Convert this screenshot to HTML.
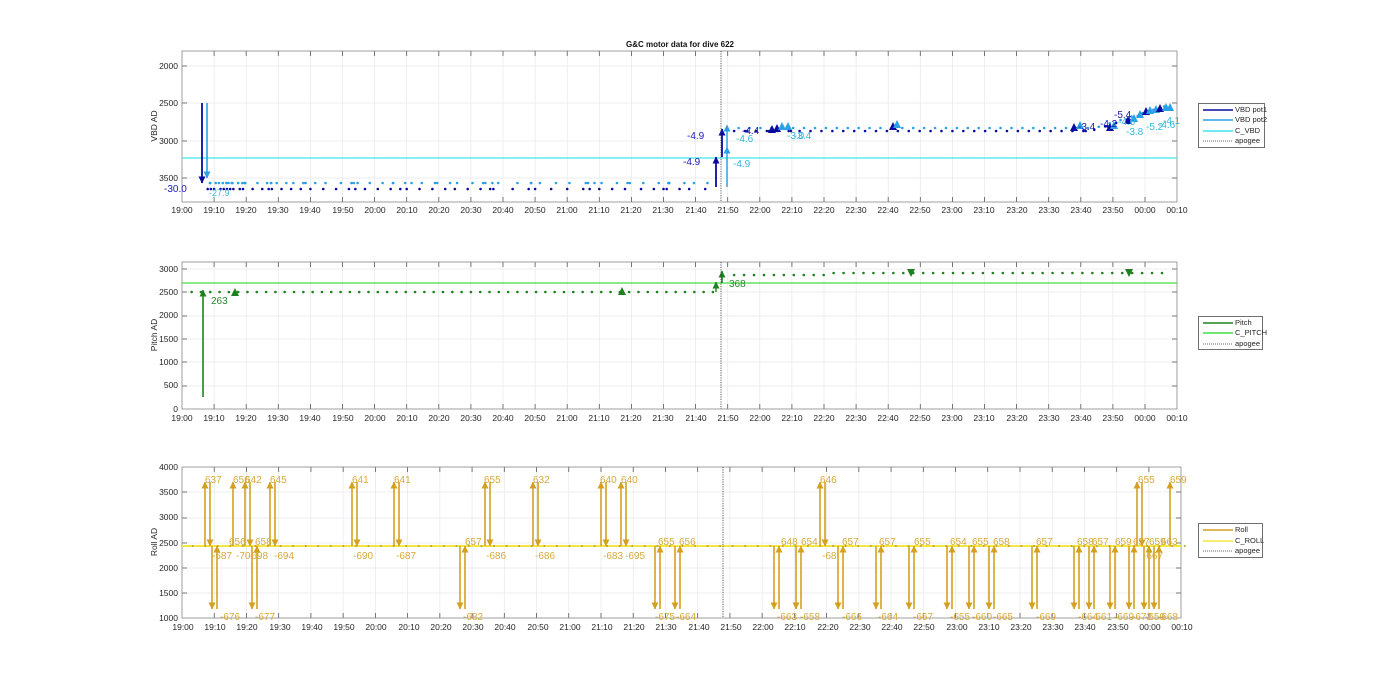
<!DOCTYPE html>
<html><head><meta charset="utf-8"><style>
html,body{margin:0;padding:0;background:#fff;width:1400px;height:693px;overflow:hidden}
svg{display:block;font-family:"Liberation Sans",Arial,sans-serif}
.tk{font-size:8.5px;fill:#262626}
.yl{font-size:8.5px;fill:#262626;text-anchor:end}
.lg{font-size:7.5px;fill:#262626}
</style></head><body>
<svg id="s" width="1400" height="693" viewBox="0 0 1400 693" xmlns="http://www.w3.org/2000/svg">
<rect width="1400" height="693" fill="#fff"/>
<g id="grid"></g>
<g id="data"></g>
<text x="680" y="47" font-size="8px" font-weight="bold" text-anchor="middle" fill="#111">G&amp;C motor data for dive 622</text>
<!-- y labels -->
<text transform="translate(157,126) rotate(-90)" font-size="8.5px" text-anchor="middle" fill="#262626">VBD AD</text>
<text transform="translate(157,335) rotate(-90)" font-size="8.5px" text-anchor="middle" fill="#262626">Pitch AD</text>
<text transform="translate(157,542) rotate(-90)" font-size="8.5px" text-anchor="middle" fill="#262626">Roll AD</text>
<!-- y tick labels -->
<g class="yl"><text x="178" y="69">2000</text><text x="178" y="106">2500</text><text x="178" y="144">3000</text><text x="178" y="181">3500</text></g>
<g class="yl"><text x="178" y="272">3000</text><text x="178" y="295">2500</text><text x="178" y="318">2000</text><text x="178" y="342">1500</text><text x="178" y="365">1000</text><text x="178" y="388">500</text><text x="178" y="412">0</text></g>
<g class="yl"><text x="178" y="470">4000</text><text x="178" y="495">3500</text><text x="178" y="520">3000</text><text x="178" y="546">2500</text><text x="178" y="571">2000</text><text x="178" y="596">1500</text><text x="178" y="621">1000</text></g>
<!-- time labels -->
<g class="tk" text-anchor="middle">
<text y="213"><tspan x="182">19:00</tspan><tspan x="214">19:10</tspan><tspan x="246">19:20</tspan><tspan x="278">19:30</tspan><tspan x="310">19:40</tspan><tspan x="343">19:50</tspan><tspan x="375">20:00</tspan><tspan x="407">20:10</tspan><tspan x="439">20:20</tspan><tspan x="471">20:30</tspan><tspan x="503">20:40</tspan><tspan x="535">20:50</tspan><tspan x="567">21:00</tspan><tspan x="599">21:10</tspan><tspan x="631">21:20</tspan><tspan x="663">21:30</tspan><tspan x="696">21:40</tspan><tspan x="728">21:50</tspan><tspan x="760">22:00</tspan><tspan x="792">22:10</tspan><tspan x="824">22:20</tspan><tspan x="856">22:30</tspan><tspan x="888">22:40</tspan><tspan x="920">22:50</tspan><tspan x="952">23:00</tspan><tspan x="984">23:10</tspan><tspan x="1017">23:20</tspan><tspan x="1049">23:30</tspan><tspan x="1081">23:40</tspan><tspan x="1113">23:50</tspan><tspan x="1145">00:00</tspan><tspan x="1177">00:10</tspan></text>
<text y="421"><tspan x="182">19:00</tspan><tspan x="214">19:10</tspan><tspan x="246">19:20</tspan><tspan x="278">19:30</tspan><tspan x="310">19:40</tspan><tspan x="343">19:50</tspan><tspan x="375">20:00</tspan><tspan x="407">20:10</tspan><tspan x="439">20:20</tspan><tspan x="471">20:30</tspan><tspan x="503">20:40</tspan><tspan x="535">20:50</tspan><tspan x="567">21:00</tspan><tspan x="599">21:10</tspan><tspan x="631">21:20</tspan><tspan x="663">21:30</tspan><tspan x="696">21:40</tspan><tspan x="728">21:50</tspan><tspan x="760">22:00</tspan><tspan x="792">22:10</tspan><tspan x="824">22:20</tspan><tspan x="856">22:30</tspan><tspan x="888">22:40</tspan><tspan x="920">22:50</tspan><tspan x="952">23:00</tspan><tspan x="984">23:10</tspan><tspan x="1017">23:20</tspan><tspan x="1049">23:30</tspan><tspan x="1081">23:40</tspan><tspan x="1113">23:50</tspan><tspan x="1145">00:00</tspan><tspan x="1177">00:10</tspan></text>
<text y="630"><tspan x="183">19:00</tspan><tspan x="215">19:10</tspan><tspan x="247">19:20</tspan><tspan x="280">19:30</tspan><tspan x="312">19:40</tspan><tspan x="344">19:50</tspan><tspan x="376">20:00</tspan><tspan x="409">20:10</tspan><tspan x="441">20:20</tspan><tspan x="473">20:30</tspan><tspan x="505">20:40</tspan><tspan x="538">20:50</tspan><tspan x="570">21:00</tspan><tspan x="602">21:10</tspan><tspan x="634">21:20</tspan><tspan x="666">21:30</tspan><tspan x="699">21:40</tspan><tspan x="731">21:50</tspan><tspan x="763">22:00</tspan><tspan x="795">22:10</tspan><tspan x="828">22:20</tspan><tspan x="860">22:30</tspan><tspan x="892">22:40</tspan><tspan x="924">22:50</tspan><tspan x="957">23:00</tspan><tspan x="989">23:10</tspan><tspan x="1021">23:20</tspan><tspan x="1053">23:30</tspan><tspan x="1085">23:40</tspan><tspan x="1118">23:50</tspan><tspan x="1150">00:00</tspan><tspan x="1182">00:10</tspan></text>
</g>
<!-- panel 1 labels -->
<g font-size="10px">
<text x="164" y="192" fill="#1a1ab0">-30.0</text>
<text x="209" y="196" fill="#40b8e8" font-size="9px">-27.9</text>
<text x="687" y="139" fill="#1a1ab0">-4.9</text>
<text x="683" y="165" fill="#1a1ab0">-4.9</text>
<text x="733" y="167" fill="#30b8e0">-4.9</text>
<text x="736" y="142" fill="#30b8e0">-4.6</text>
<text x="742" y="134" fill="#1a1ab0">-4.4</text>
<text x="787" y="139" fill="#30b8e0">-3.0</text>
<text x="794" y="139" fill="#30b8e0">-3.4</text>
<text x="1078" y="130" fill="#1a1ab0">-3.4</text>
<text x="1114" y="118" fill="#1a1ab0">-5.4</text>
<text x="1100" y="127" fill="#1a1ab0">-4.2</text>
<text x="1118" y="125" fill="#30b8e0">-4.6</text>
<text x="1126" y="135" fill="#30b8e0">-3.8</text>
<text x="1146" y="130" fill="#30b8e0">-5.2</text>
<text x="1163" y="124" fill="#30b8e0">-4.1</text>
<text x="1158" y="128" fill="#30b8e0">-4.6</text>
</g>
<!-- panel 2 labels -->
<g font-size="10px" fill="#2a8a2a"><text x="211" y="304">263</text><text x="729" y="287">368</text></g>
<!-- panel 3 labels -->
<g font-size="10px" fill="#d6aa3a" id="rl">
<text x="205" y="483">637</text><text x="233" y="483">656</text><text x="245" y="483">642</text><text x="270" y="483">645</text>
<text x="352" y="483">641</text><text x="394" y="483">641</text><text x="484" y="483">655</text><text x="533" y="483">632</text>
<text x="600" y="483">640</text><text x="621" y="483">640</text><text x="820" y="483">646</text><text x="1138" y="483">655</text><text x="1170" y="483">659</text>
<text x="212" y="559">-687</text><text x="229" y="545">656</text><text x="236" y="559">-70</text><text x="248" y="559">-698</text><text x="255" y="545">658</text><text x="274" y="559">-694</text>
<text x="353" y="559">-690</text><text x="396" y="559">-687</text><text x="486" y="559">-686</text><text x="535" y="559">-686</text>
<text x="603" y="559">-683</text><text x="625" y="559">-695</text><text x="822" y="559">-68</text><text x="1143" y="559">-667</text>
<text x="220" y="620">-676</text><text x="255" y="620">-677</text><text x="463" y="620">-682</text><text x="655" y="620">-675</text><text x="676" y="620">-664</text>
<text x="465" y="545">657</text><text x="658" y="545">655</text><text x="679" y="545">656</text>
<text x="781" y="545">648</text><text x="801" y="545">654</text><text x="842" y="545">657</text><text x="879" y="545">657</text><text x="914" y="545">655</text><text x="950" y="545">654</text><text x="972" y="545">655</text><text x="993" y="545">658</text><text x="1036" y="545">657</text><text x="1077" y="545">658</text><text x="1092" y="545">657</text><text x="1115" y="545">659</text><text x="1133" y="545">657</text><text x="1149" y="545">659</text><text x="1161" y="545">663</text>
<text x="777" y="620">-663</text><text x="800" y="620">-658</text><text x="842" y="620">-666</text><text x="878" y="620">-664</text><text x="913" y="620">-667</text><text x="950" y="620">-655</text><text x="972" y="620">-660</text><text x="993" y="620">-665</text><text x="1036" y="620">-669</text><text x="1078" y="620">-664</text><text x="1092" y="620">-661</text><text x="1114" y="620">-669</text><text x="1132" y="620">-672</text><text x="1145" y="620">-659</text><text x="1158" y="620">-668</text>
</g>
<!-- legends -->
<g>
<rect x="1198.5" y="103.5" width="66" height="44" fill="#fff" stroke="#333" stroke-width="0.7"/>
<line x1="1203" y1="110" x2="1233" y2="110" stroke="#0a0aa0" stroke-width="1.5"/><text class="lg" x="1235" y="112">VBD pot1</text>
<line x1="1203" y1="120" x2="1233" y2="120" stroke="#2aa0e6" stroke-width="1.5"/><text class="lg" x="1235" y="122">VBD pot2</text>
<line x1="1203" y1="131" x2="1233" y2="131" stroke="#3ee6ee" stroke-width="1.5"/><text class="lg" x="1235" y="133">C_VBD</text>
<line x1="1203" y1="141" x2="1233" y2="141" stroke="#333" stroke-width="0.8" stroke-dasharray="1,1"/><text class="lg" x="1235" y="143">apogee</text>
<rect x="1198.5" y="316.5" width="64" height="33" fill="#fff" stroke="#333" stroke-width="0.7"/>
<line x1="1203" y1="323" x2="1233" y2="323" stroke="#1f801f" stroke-width="1.5"/><text class="lg" x="1235" y="325">Pitch</text>
<line x1="1203" y1="333" x2="1233" y2="333" stroke="#44dd44" stroke-width="1.5"/><text class="lg" x="1235" y="335">C_PITCH</text>
<line x1="1203" y1="344" x2="1233" y2="344" stroke="#333" stroke-width="0.8" stroke-dasharray="1,1"/><text class="lg" x="1235" y="346">apogee</text>
<rect x="1198.5" y="523.5" width="64" height="34" fill="#fff" stroke="#333" stroke-width="0.7"/>
<line x1="1203" y1="530" x2="1233" y2="530" stroke="#d4a020" stroke-width="1.5"/><text class="lg" x="1235" y="532">Roll</text>
<line x1="1203" y1="541" x2="1233" y2="541" stroke="#f2e640" stroke-width="1.5"/><text class="lg" x="1235" y="543">C_ROLL</text>
<line x1="1203" y1="551" x2="1233" y2="551" stroke="#333" stroke-width="0.8" stroke-dasharray="1,1"/><text class="lg" x="1235" y="553">apogee</text>
</g>
</svg>
<script>
(function(){
var NS="http://www.w3.org/2000/svg",G=document.getElementById('grid'),D=document.getElementById('data');
function el(p,tag,a){var e=document.createElementNS(NS,tag);for(var k in a)e.setAttribute(k,a[k]);p.insertBefore(e,p.id=='data'?null:null);p.appendChild(e);return e;}
function ln(p,x1,y1,x2,y2,c,w,da){var a={x1:x1,y1:y1,x2:x2,y2:y2,stroke:c,'stroke-width':w||1};if(da)a['stroke-dasharray']=da;return el(p,'line',a);}
function dot(x,y,c){el(D,'circle',{cx:x,cy:y,r:1.3,fill:c});}
function tri(x,y,c,s,down){s=s||4;var p=down?[x-s,y-s,x+s,y-s,x,y+s]:[x-s,y+s,x+s,y+s,x,y-s];el(D,'polygon',{points:p.join(','),fill:c});}
function arrow(x,y1,y2,c,w){ln(D,x,y1,x,y2,c,w||1.6);tri(x,y2+(y2<y1?3:-3),c,3.5,y2>y1);}
var panels=[{x:182,y:51,w:995,h:151,sp:32.1,yt:[66,103,141,178]},{x:182,y:262,w:995,h:147,sp:32.1,yt:[269,292,316,339,362,386]},{x:182,y:467,w:999,h:151,sp:32.23,yt:[492,518,543,568,593]}];
panels.forEach(function(P){
 for(var i=1;i<31;i++){var x=P.x+P.sp*i;ln(G,x,P.y,x,P.y+P.h,'#e8e8e8',0.7);ln(G,x,P.y,x,P.y+5,'#555',0.8);ln(G,x,P.y+P.h,x,P.y+P.h-5,'#555',0.8);}
 P.yt.forEach(function(y){ln(G,P.x,y,P.x+P.w,y,'#e8e8e8',0.7);ln(G,P.x,y,P.x+5,y,'#555',0.8);ln(G,P.x+P.w,y,P.x+P.w-5,y,'#555',0.8);});
 el(G,'rect',{x:P.x,y:P.y,width:P.w,height:P.h,fill:'none',stroke:'#888','stroke-width':0.8});
});
function X(t){return 182+3.21*t;}
var dk='#0a0aa0',lb='#2aa0e6';
// panel1
ln(D,182,158,1177,158,'#3ee6ee',1.2);
var ts=[8,9,10,12,13,14,15,16,18,19,22,25,27,28,31,34,37,40,44,48,52,54,57,61,65,68,70,74,78,82,85,89,93,96,97,103,108,110,115,120,125,127,130,134,138,143,147,150,151,155,158,163];
ts.forEach(function(t,i){dot(X(t),189,dk);dot(X(t+ (i%3?1.5:0.7)),183,lb);if(i%4==0)dot(X(t+0.8),183,lb);});
for(var t=172;t<307;t+=3.4){var y=t<283?131:131-(t-283)*1.0;dot(X(t),y,dk);dot(X(t+1.4),y-3,lb);if((t|0)%7==0)dot(X(t+0.7),y,dk);}
arrow(202,103,183,dk,1.8);arrow(207,103,178,lb,1.6);
arrow(716,187,157,dk,1.8);arrow(722,157,129,dk,1.8);ln(D,727,187,727,130,lb,1.4);tri(727,150,lb,3.5);tri(727,128,lb,3.5);
[[772,129,dk],[777,128,dk],[782,126,lb],[788,126,lb],[893,126,dk],[897,124,lb],[1074,127,dk],[1080,125,lb],[1110,127,dk],[1114,125,lb],[1128,120,dk],[1134,118,lb],[1140,114,lb],[1146,111,dk],[1150,110,lb],[1156,109,lb],[1160,108,dk],[1166,107,lb],[1170,107,lb]].forEach(function(a){tri(a[0],a[1],a[2],4);});
ln(D,721,51,721,202,'#333',0.8,'1.2,1.2');
// panel2
var gr='#1f801f';
ln(D,182,283,1177,283,'#44dd44',1.2);
for(var t=3;t<166;t+=2.9){dot(X(t),292,gr);}
for(var t=172;t<307;t+=3.1){dot(X(t),t<200?275:273,gr);}
arrow(203,397,290,gr,1.6);tri(235,292,gr,4);tri(622,291,gr,4);
arrow(716,292,282,gr,1.4);arrow(722,283,271,gr,1.6);
tri(911,273,gr,4,true);tri(1129,273,gr,4,true);
ln(D,721,262,721,409,'#333',0.8,'1.2,1.2');
// panel3
var rc='#d4a020';
ln(D,182,546,1181,546,'#f2e640',2);
for(var t=3;t<312;t+=3.9){el(D,'circle',{cx:183+3.22*t,cy:546,r:1,fill:'#b8a040'});}
function up(x){arrow(x,546,482,rc,1.6);arrow(x+5,482,546,rc,1.6);}
function dn(x){arrow(x,546,609,rc,1.6);arrow(x+5,609,546,rc,1.6);}
[205,245,270,352,394,485,533,601,621,820,1137].forEach(up);
arrow(233,546,482,rc,1.6);arrow(1170,546,482,rc,1.6);
[212,252,460,655,675,774,796,838,876,909,947,969,989,1032,1074,1089,1110,1129,1144,1154].forEach(dn);
ln(D,723,467,723,618,'#333',0.8,'1.2,1.2');
})();
</script>
</body></html>
